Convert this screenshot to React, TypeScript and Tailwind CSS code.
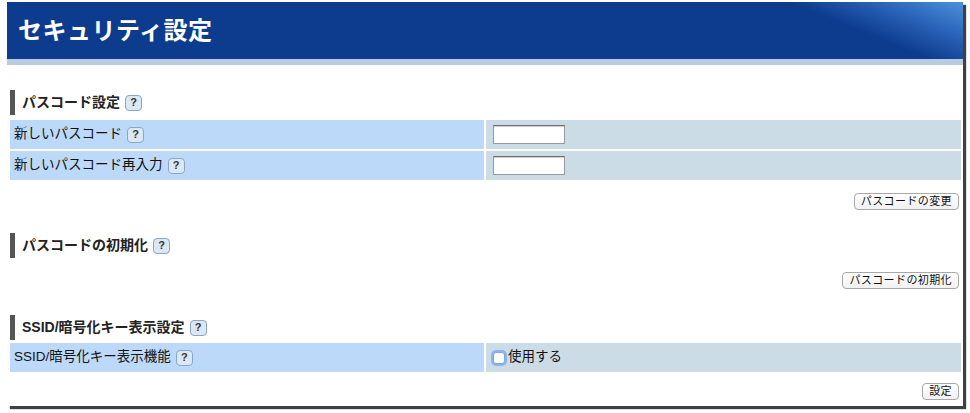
const font = { fontFamily: '"Liberation Sans", "Noto Sans CJK JP", sans-serif' };

const Help = () => (
  <span className="ml-[5px] inline-flex h-[16px] w-[17px] items-center justify-center rounded-[4px] border border-[#8ba6c4] bg-[#dce7f4] text-[11px] font-bold leading-none text-[#333]">
    ?
  </span>
);

const Heading = ({ title, className }: { title: string; className: string }) => (
  <div className={`flex h-[25px] items-center ${className}`}>
    <div className="h-full w-[5px] bg-[#555]" />
    <span className="ml-[7px] text-[14px] font-bold text-[#222]">{title}</span>
    <Help />
  </div>
);

const Row = ({ label, children, className = "" }: { label: string; children: React.ReactNode; className?: string }) => (
  <div className={`flex h-[29px] ${className}`}>
    <div className="flex w-[474px] items-center bg-[#bdd9fa] pl-[4px] text-[13.5px] text-[#111]">
      {label}
      <Help />
    </div>
    <div className="ml-[2px] flex flex-1 items-center bg-[#ccdce7] pl-[7px]">{children}</div>
  </div>
);

const Field = () => (
  <div className="h-[19px] w-[72px] border border-[#9a9a9a] border-t-[#6e6e6e] bg-white shadow-[inset_0_1px_1px_rgba(0,0,0,0.2)]" />
);

const Btn = ({ label, className }: { label: string; className: string }) => (
  <div className={`flex justify-end pr-[2px] ${className}`}>
    <button className="flex h-[17px] items-center rounded-[4px] border border-[#a8a8a8] bg-gradient-to-b from-white to-[#f1f1f1] px-[6px] text-[11px] tracking-[0.4px] text-[#111]">
      {label}
    </button>
  </div>
);

export default function App() {
  return (
    <div className="h-[413px] w-[970px] overflow-hidden bg-white pl-[7px] pt-[2px]" style={font}>
      <div className="h-[404px] w-[956px] bg-white shadow-[3px_3px_1px_rgba(0,0,0,0.75)]">
        <div className="flex h-[57px] items-center bg-[linear-gradient(22deg,#0d3b8e_0%,#0d3b8e_84%,#2a64b8_92%,#4b91dc_100%)] pl-[11px]">
          <h1 className="text-[24px] font-bold tracking-[0.5px] text-white">セキュリティ設定</h1>
        </div>
        <div className="h-[6px] bg-[#b9cbdc]" />

        <div className="pl-[3px] pr-[2px]">
          <Heading title="パスコード設定" className="mt-[25px]" />
          <Row label="新しいパスコード" className="mt-[5px]">
            <Field />
          </Row>
          <Row label="新しいパスコード再入力" className="mt-[2px]">
            <Field />
          </Row>
          <Btn label="パスコードの変更" className="mt-[13px]" />

          <Heading title="パスコードの初期化" className="mt-[23px]" />
          <Btn label="パスコードの初期化" className="mt-[14px]" />

          <Heading title="SSID/暗号化キー表示設定" className="mt-[26px]" />
          <Row label="SSID/暗号化キー表示機能" className="mt-[3px]">
            <span className="inline-block h-[12px] w-[12px] rounded-[3px] border border-[#7ea7dd] bg-white shadow-[0_0_0_2px_#8db5ec]" />
            <span className="ml-[3px] text-[13.5px] text-[#111]">使用する</span>
          </Row>
          <Btn label="設定" className="mt-[11px]" />
        </div>
      </div>
    </div>
  );
}
